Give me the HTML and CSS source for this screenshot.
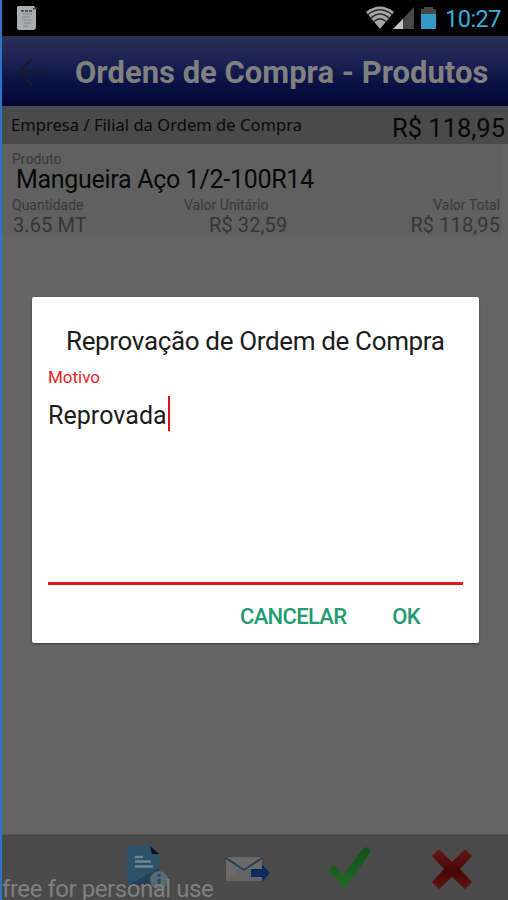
FILE: index.html
```html
<!DOCTYPE html>
<html lang="pt-BR">
<head>
<meta charset="utf-8">
<title>Ordens de Compra - Produtos</title>
<link rel="stylesheet" href="styles.css">
</head>
<body>
<div class="screen">
  <header class="status">
    <svg class="note" width="22" height="26" viewBox="0 0 22 26"><path d="M2 1h16l2 3v18q0 3-3 3H3q-2 0-2-2V2z" fill="#a9adb0"/><path d="M6 9h10M6 12h8M7 15h9M8 18h7M7 21h5" stroke="#7b8991" stroke-width="1"/><path d="M5 6h3m1 0h3m1 0h3M17 4l4-1" stroke="#303d46" stroke-width="1.500"/></svg>
    <div class="tray">
      <svg class="wifi" width="28" height="24" viewBox="0 0 28 24"><path d="M0 6Q14-5 28 6L14 23z" fill="#a6a6a6"/><path d="M2 8.500Q14-1 26 8.500M5 12Q14 4 23 12M8 15.500Q14 10 20 15.500" fill="none" stroke="#292929" stroke-width="1.300"/></svg>
      <svg class="signal" width="21" height="24" viewBox="0 0 21 24"><path d="M0 23L21 1v22z" fill="#484848"/><path d="M0 23l10-10v10z" fill="#c4c4c4"/></svg>
      <svg class="battery" width="15" height="24" viewBox="0 0 15 24"><path d="M3 1h9v2h3v5H0V3h3z" fill="#494641"/><path d="M0 8h15v15H0z" fill="#319bc5"/></svg>
      <span class="clock">10:27</span>
    </div>
  </header>
  <div class="appbar">
    <svg class="back" width="30" height="28" viewBox="0 0 30 28"><path d="M15 1L2 14l13 13M2 14h28" fill="none" stroke="#171b2c" stroke-width="2.600"/></svg>
    <h1>Ordens de Compra - Produtos</h1>
  </div>
  <div class="order"><span class="company">Empresa / Filial da Ordem de Compra</span><span class="sum">R$ 118,95</span></div>
  <main>
    <section class="product">
      <div class="label">Produto</div>
      <div class="name">Mangueira Aço 1/2-100R14</div>
      <div class="cols label"><span>Quantidade</span><span>Valor Unitário</span><span>Valor Total</span></div>
      <div class="cols value"><span>3.65 MT</span><span class="unit">R$ 32,59</span><span>R$ 118,95</span></div>
    </section>
  </main>
  <footer>
    <svg class="i-doc" width="44" height="44" viewBox="0 0 44 44"><path d="M1 0h24l8 8v31H1z" fill="#2b516b"/><path d="M33 22v17H3z" fill="#243f56"/><path d="M24 0l9 8h-7z" fill="#10131f"/><path d="M9 11h8M9 15.500h16M9 20.500h18" stroke="#718592" stroke-width="2.500"/><circle cx="33" cy="34" r="9" fill="#5b6973"/><path d="M33 28v3M33 33v7" stroke="#2b4b63" stroke-width="3"/></svg>
    <svg class="i-mail" width="46" height="30" viewBox="0 0 46 30"><path d="M1 2h36v24H1z" fill="#6a6a6a"/><path d="M2 26l11-12 6 4 6-4 12 12" fill="#646464"/><path d="M1 3l18 12L37 3" fill="none" stroke="#213f5c" stroke-width="1.800"/><path d="M26 14h11V9l8 9-8 9v-5H26z" fill="#0b2c5b"/></svg>
    <svg class="i-ok" width="44" height="42" viewBox="0 0 44 42"><defs><linearGradient id="g" x2="0" y2="1"><stop stop-color="#104f18"/><stop offset="1" stop-color="#226b25"/></linearGradient></defs><path d="M0 23l6-4q1-1 2 1l6 9L35 2q2-3 5-1l3 3L17 42z" fill="url(#g)"/></svg>
    <svg class="i-no" width="42" height="42" viewBox="0 0 42 42"><defs><linearGradient id="r" x2="0" y2="1"><stop stop-color="#641817"/><stop offset=".55" stop-color="#490707"/><stop offset="1" stop-color="#621111"/></linearGradient></defs><path d="M8 1l13 13L34 1l7 7-12 13 12 13-7 7-13-12L8 41l-7-7 12-13L1 8z" fill="url(#r)"/></svg>
  </footer>
  <div class="watermark">free for personal use</div>
  <div class="dialog">
    <h2>Reprovação de Ordem de Compra</h2>
    <div class="motivo">Motivo</div>
    <div class="field"><span class="typed">Reprovada</span><i class="caret"></i></div>
    <div class="actions"><span>CANCELAR</span><span>OK</span></div>
  </div>
</div>
</body>
</html>
```

FILE: styles.css
```css
* { box-sizing: border-box; }
body { margin: 0; background: #646464; font-family: Roboto, "Liberation Sans", sans-serif; }
.screen { position: relative; width: 508px; height: 900px; display: flex; flex-direction: column; overflow: hidden; border-left: 2px solid #2877c5; white-space: nowrap; }
svg { display: block; flex: none; }
h1, h2 { margin: 0; }
.status { height: 36px; background: #000; display: flex; justify-content: space-between; align-items: center; padding: 0 7px 0 14px; }
.tray { display: flex; align-items: center; }
.battery { margin: 0 9px 0 7px; }
.signal { margin-left: -1px; }
.clock { font-size: 23.5px; line-height: 36px; color: #35b0dc; letter-spacing: -0.5px; padding-top: 2px; }
.appbar { height: 70px; background: linear-gradient(#292f55, #1c2354 35%, #0a1144 68%, #000735); display: flex; align-items: center; padding: 2px 0 0 15px; }
h1 { font-size: 31px; line-height: 40px; font-weight: 700; color: #808080; margin: 2px 0 0 28px; }
.order { height: 38px; background: #4a4a4a; display: flex; justify-content: space-between; color: #080808; padding: 0 3px 0 9px; }
.company { font-family: "Noto Sans", sans-serif; font-size: 16.5px; line-height: 37px; letter-spacing: 0.05px; }
.sum { font-size: 25.5px; line-height: 45px; }
main { flex: 1; }
.product { height: 93px; margin-right: 6px; background: #606060; padding-top: 7px; }
.label { height: 17px; font-size: 14px; line-height: 17px; color: #3a3a3a; padding: 0 2px 0 10px; }
.name { height: 29px; font-size: 25px; line-height: 24px; color: #080808; padding-left: 14px; letter-spacing: -0.3px; }
.cols { display: grid; grid-template-columns: 172px 1fr auto; }
.value { font-size: 20px; line-height: 23px; color: #363636; padding: 0 2px 0 11px; letter-spacing: 0.1px; }
.unit { padding-left: 24px; }
footer { height: 66px; background: #4a4a4a; border-top: 1px solid #565656; display: flex; align-items: flex-start; padding: 11px 0 0 124px; }
.i-mail { margin: 9px 0 0 55px; }
.i-ok { margin: 1px 0 0 57px; }
.i-no { margin: 2px 0 0 59px; }
.watermark { position: absolute; left: 0; bottom: -4px; font-size: 24px; line-height: 30px; color: #808080; letter-spacing: -0.45px; }
.dialog { position: absolute; left: 30px; top: 297px; width: 447px; height: 346px; background: #fff; border-radius: 2px; box-shadow: 0 1px 2px #3e3e3e; padding: 27px 16px 0; display: flex; flex-direction: column; }
h2 { font-size: 26px; line-height: 34px; font-weight: 400; color: #1c1c1c; margin-left: 18px; letter-spacing: -0.35px; }
.motivo { font-size: 17px; line-height: 20px; color: #ed1c24; margin-top: 9px; }
.field { height: 198px; border-bottom: 3px solid #e6161b; display: flex; align-items: flex-start; padding-top: 9px; }
.typed { font-size: 25px; line-height: 40px; color: #1c1c1c; letter-spacing: 0.05px; }
.caret { width: 2px; height: 35px; margin-left: 1px; background: #de1018; }
.actions { display: flex; justify-content: flex-end; gap: 46px; padding: 16px 43px 0 0; font-size: 22px; line-height: 31px; font-weight: 500; color: #239b70; letter-spacing: -0.7px; }
```
